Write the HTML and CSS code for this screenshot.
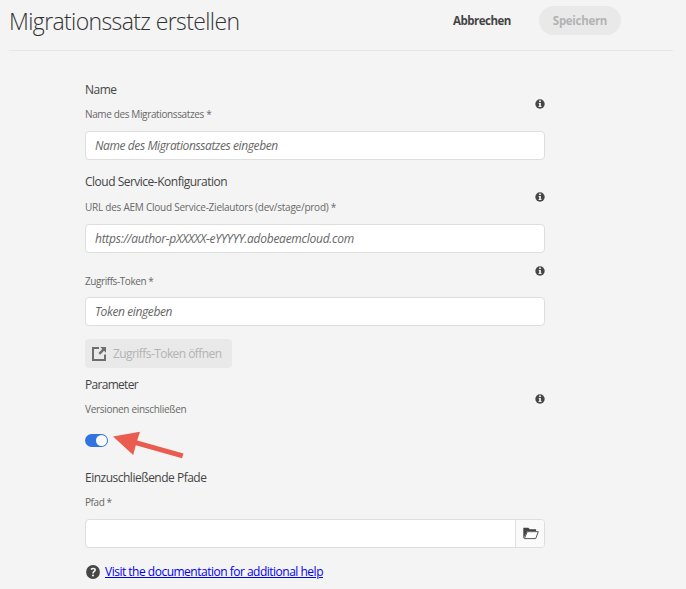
FILE: index.html
```html
<!DOCTYPE html>
<html lang="de">
<head>
<meta charset="utf-8">
<title>Migrationssatz erstellen</title>
<link rel="stylesheet" href="styles.css">
</head>
<body>
<svg width="0" height="0" class="defs" aria-hidden="true">
  <symbol id="info" viewBox="0 0 10 10">
    <circle cx="5" cy="5" r="4.7" fill="#464646"/>
    <path d="M4.1 1.6h1.8v1.5H4.1zM3.7 4h2.2v3.1h.6V8H3.6v-.9h.6V4.9h-.5z" fill="#f5f5f5"/>
  </symbol>
</svg>
<header class="header">
  <h1 class="title">Migrationssatz erstellen</h1>
  <button class="cancel">Abbrechen</button>
  <button class="save" disabled>Speichern</button>
</header>
<main class="form">
  <section class="group first">
    <div class="labels">
      <h2>Name</h2>
      <label class="w-name">Name des Migrationssatzes *</label>
    </div>
    <svg class="info"><use href="#info"/></svg>
  </section>
  <div class="field"><span class="p-name">Name des Migrationssatzes eingeben</span></div>

  <section class="group cloud">
    <div class="labels">
      <h2>Cloud Service-Konfiguration</h2>
      <label class="w-url">URL des AEM Cloud Service-Zielautors (dev/stage/prod) *</label>
    </div>
    <svg class="info"><use href="#info"/></svg>
  </section>
  <div class="field"><span class="p-url">https://author-pXXXXX-eYYYYY.adobeaemcloud.com</span></div>

  <section class="group token">
    <div class="labels"><label class="w-token">Zugriffs-Token *</label></div>
    <svg class="info"><use href="#info"/></svg>
  </section>
  <div class="field"><span class="p-name">Token eingeben</span></div>

  <button class="open-token" disabled>
    <svg width="16" height="16" viewBox="0 0 16 16"><path d="M8 2H2v12h12V8.6" fill="none" stroke="#6e6e6e" stroke-width="2"/><path d="M9.200 1H15v5.800l-2-2-3.800 3.900-1.700-1.700L11.300 3.100z" fill="#6e6e6e"/></svg>
    <span>Zugriffs-Token öffnen</span>
  </button>

  <section class="group params">
    <div class="labels">
      <h2 class="h-param">Parameter</h2>
      <label>Versionen einschließen</label>
    </div>
    <svg class="info"><use href="#info"/></svg>
  </section>
  <div class="toggle-row">
    <span class="toggle"></span>
    <svg class="arrow" width="72" height="26" viewBox="0 0 72 26"><path d="M0 2.500 27 -2.300 24.200 6.500 70.500 19.600 69 24.200 22.800 11.300 20.200 21z" fill="#ea5b50"/></svg>
  </div>

  <section class="group paths">
    <div class="labels">
      <h2>Einzuschließende Pfade</h2>
      <label class="w-token">Pfad *</label>
    </div>
  </section>
  <div class="field path-field">
    <span></span>
    <button class="browse"><svg width="16" height="13" viewBox="0 0 16 13"><path d="M.3 11.800V.7h5l1.500 1.600h6.300v2H4.300z" fill="#444"/><path d="M4.300 4.700h11L12.700 11.600H1.400z" fill="#fff" stroke="#555" stroke-width="1"/></svg></button>
  </div>
  <div class="help">
    <svg width="14" height="14" viewBox="0 0 14 14"><circle cx="7" cy="7" r="6.900" fill="#464646"/><path d="M4.900 4.500C6 3.200 9.200 3 9.200 5c0 1.500-2.200 1.500-2.200 3.400" fill="none" stroke="#f5f5f5" stroke-width="1.600"/><circle cx="7" cy="10.500" r="1.050" fill="#f5f5f5"/></svg>
    <a href="#">Visit the documentation for additional help</a>
  </div>
</main>
</body>
</html>
```
FILE: styles.css
```css
* { box-sizing: border-box; }
body {
  margin: 0;
  height: 589px;
  overflow: hidden;
  background: #f4f4f4;
  color: #444;
  font-family: "Open Sans", "Noto Sans", sans-serif;
  font-size: 12px;
  letter-spacing: -0.3px;
  white-space: nowrap;
}
.defs { display: block; }
button { font: inherit; letter-spacing: inherit; border: 0; padding: 0; background: none; }
.header {
  display: flex;
  height: 51px;
  margin: 0 13px 0 9px;
  border-bottom: 1px solid #e7e7e7;
}
.title {
  margin: 0;
  width: 444px;
  font-size: 23px;
  font-weight: 300;
  line-height: 42px;
  letter-spacing: -0.62px;
  color: #323232;
}
.cancel { width: 58px; height: 28px; margin-top: 6px; font-size: 11.5px; font-weight: 700; letter-spacing: -0.5px; color: #444; text-align: left; }
.save {
  width: 82px;
  height: 29px;
  margin: 6px 0 0 28px;
  border-radius: 15px;
  background: #e9e9e9;
  color: #b3b3b3;
  font-size: 11.5px;
  font-weight: 700;
}
.form { width: 460px; margin-left: 85px; }
.group { display: flex; justify-content: space-between; }
.labels { display: flex; flex-direction: column; align-items: flex-start; }
.group h2 { margin: 0 0 5px; font-size: 12px; font-weight: 400; line-height: 20px; letter-spacing: -0.5px; }
.group .h-param { letter-spacing: -0.7px; }
.group label { font-size: 10px; line-height: 18px; color: #686868; }
.w-name { letter-spacing: -0.37px; }
.w-url { letter-spacing: -0.24px; }
.w-token { letter-spacing: -0.43px; }
.p-name { letter-spacing: -0.39px; }
.p-url { letter-spacing: -0.26px; }
.info { width: 10px; height: 10px; }
.first { height: 80px; padding-top: 29px; }
.first .info { margin-top: 19px; }
.cloud { height: 64px; padding-top: 12px; }
.cloud h2 { margin-bottom: 6px; }
.cloud .info { margin-top: 20px; }
.token { height: 44px; padding-top: 12px; }
.token label { margin-top: 7px; }
.token .info { margin-top: 1px; }
.params { height: 66px; padding-top: 7px; }
.params .info { margin-top: 19px; }
.paths { height: 72px; padding-top: 21px; }
.field {
  height: 29px;
  border: 1px solid #dedede;
  border-radius: 4px;
  padding-left: 9px;
  background: #fff;
  color: #666;
  font-style: italic;
  line-height: 27px;
}
.open-token {
  display: flex;
  align-items: center;
  gap: 6px;
  width: 147px;
  height: 29px;
  margin-top: 13px;
  padding-left: 6px;
  border-radius: 4px;
  background: #e9e9e9;
  color: #b3b3b3;
  letter-spacing: -0.57px;
}
.toggle-row { display: flex; height: 13px; }
.toggle {
  width: 23px;
  height: 13px;
  border-radius: 7px;
  padding: 1px 1px 1px 11px;
  background: #3274df;
}
.toggle::after { content: ""; display: block; width: 11px; height: 11px; border-radius: 50%; background: #fafafa; }
.arrow { margin: 0 0 0 5px; overflow: visible; flex: none; }
.path-field { display: flex; justify-content: space-between; }
.browse {
  display: flex;
  align-items: center;
  justify-content: center;
  width: 29px;
  padding-left: 2px;
  border-left: 1px solid #dedede;
  border-radius: 0 3px 3px 0;
  background: #fafafa;
}
.help { display: flex; align-items: center; gap: 5px; height: 20px; margin: 14px 0 0 1px; }
.help a { color: #0000ee; line-height: 20px; letter-spacing: -0.5px; }
```
